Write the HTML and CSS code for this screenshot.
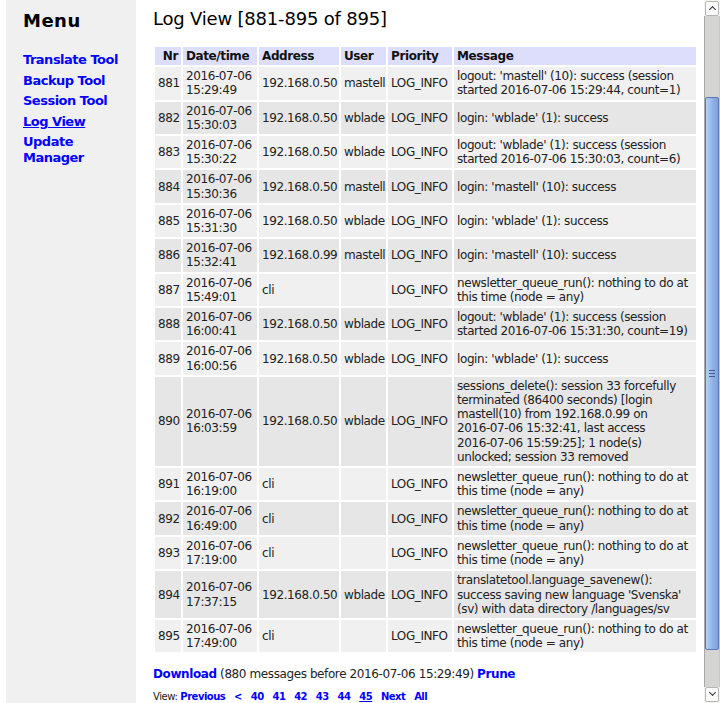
FILE: index.html
```html
<!DOCTYPE html>
<html lang="en">
<head>
    <meta charset="UTF-8">
    <title>Log View</title>
    <link rel="stylesheet" href="styles.css">
</head>
<body>
    <div class="page">
        <nav class="sidebar">
            <h2>Menu</h2>
            <ul class="menu">
                <li><a href="#">Translate Tool</a></li>
                <li><a href="#">Backup Tool</a></li>
                <li><a href="#">Session Tool</a></li>
                <li><a href="#" class="current">Log View</a></li>
                <li><a href="#">Update Manager</a></li>
            </ul>
        </nav>

        <main class="content">
            <h1>Log View [881-895 of 895]</h1>

            <table class="log">
                <thead>
                    <tr>
                        <th class="nr">Nr</th>
                        <th class="date">Date/time</th>
                        <th class="addr">Address</th>
                        <th class="user">User</th>
                        <th class="prio">Priority</th>
                        <th>Message</th>
                    </tr>
                </thead>
                <tbody>
                    <tr><td class="nr">881</td><td class="date">2016-07-06<br>15:29:49</td><td class="addr">192.168.0.50</td><td class="user">mastell</td><td class="prio">LOG_INFO</td><td>logout: 'mastell' (10): success (session started <span class="ts">2016-07-06</span> 15:29:44, count=1)</td></tr>
                    <tr><td class="nr">882</td><td class="date">2016-07-06<br>15:30:03</td><td class="addr">192.168.0.50</td><td class="user">wblade</td><td class="prio">LOG_INFO</td><td>login: 'wblade' (1): success</td></tr>
                    <tr><td class="nr">883</td><td class="date">2016-07-06<br>15:30:22</td><td class="addr">192.168.0.50</td><td class="user">wblade</td><td class="prio">LOG_INFO</td><td>logout: 'wblade' (1): success (session started <span class="ts">2016-07-06</span> 15:30:03, count=6)</td></tr>
                    <tr><td class="nr">884</td><td class="date">2016-07-06<br>15:30:36</td><td class="addr">192.168.0.50</td><td class="user">mastell</td><td class="prio">LOG_INFO</td><td>login: 'mastell' (10): success</td></tr>
                    <tr><td class="nr">885</td><td class="date">2016-07-06<br>15:31:30</td><td class="addr">192.168.0.50</td><td class="user">wblade</td><td class="prio">LOG_INFO</td><td>login: 'wblade' (1): success</td></tr>
                    <tr><td class="nr">886</td><td class="date">2016-07-06<br>15:32:41</td><td class="addr">192.168.0.99</td><td class="user">mastell</td><td class="prio">LOG_INFO</td><td>login: 'mastell' (10): success</td></tr>
                    <tr><td class="nr">887</td><td class="date">2016-07-06<br>15:49:01</td><td class="addr">cli</td><td class="user"></td><td class="prio">LOG_INFO</td><td>newsletter_queue_run(): nothing to do at this time (node = any)</td></tr>
                    <tr><td class="nr">888</td><td class="date">2016-07-06<br>16:00:41</td><td class="addr">192.168.0.50</td><td class="user">wblade</td><td class="prio">LOG_INFO</td><td>logout: 'wblade' (1): success (session started <span class="ts">2016-07-06</span> 15:31:30, count=19)</td></tr>
                    <tr><td class="nr">889</td><td class="date">2016-07-06<br>16:00:56</td><td class="addr">192.168.0.50</td><td class="user">wblade</td><td class="prio">LOG_INFO</td><td>login: 'wblade' (1): success</td></tr>
                    <tr><td class="nr">890</td><td class="date">2016-07-06<br>16:03:59</td><td class="addr">192.168.0.50</td><td class="user">wblade</td><td class="prio">LOG_INFO</td><td>sessions_delete(): session 33 forcefully terminated (86400 seconds) [login mastell(10) from 192.168.0.99 on <span class="ts">2016-07-06</span> 15:32:41, last access <span class="ts">2016-07-06</span> 15:59:25]; 1 node(s) unlocked; session 33 removed</td></tr>
                    <tr><td class="nr">891</td><td class="date">2016-07-06<br>16:19:00</td><td class="addr">cli</td><td class="user"></td><td class="prio">LOG_INFO</td><td>newsletter_queue_run(): nothing to do at this time (node = any)</td></tr>
                    <tr><td class="nr">892</td><td class="date">2016-07-06<br>16:49:00</td><td class="addr">cli</td><td class="user"></td><td class="prio">LOG_INFO</td><td>newsletter_queue_run(): nothing to do at this time (node = any)</td></tr>
                    <tr><td class="nr">893</td><td class="date">2016-07-06<br>17:19:00</td><td class="addr">cli</td><td class="user"></td><td class="prio">LOG_INFO</td><td>newsletter_queue_run(): nothing to do at this time (node = any)</td></tr>
                    <tr><td class="nr">894</td><td class="date">2016-07-06<br>17:37:15</td><td class="addr">192.168.0.50</td><td class="user">wblade</td><td class="prio">LOG_INFO</td><td>translatetool.language_savenew(): success saving new language 'Svenska' (sv) with data directory /languages/sv</td></tr>
                    <tr><td class="nr">895</td><td class="date">2016-07-06<br>17:49:00</td><td class="addr">cli</td><td class="user"></td><td class="prio">LOG_INFO</td><td>newsletter_queue_run(): nothing to do at this time (node = any)</td></tr>
                </tbody>
            </table>

            <p class="actions"><a href="#">Download</a> (880 messages before 2016-07-06 15:29:49) <a href="#">Prune</a></p>

            <p class="pager">View: <a href="#">Previous</a> <a href="#">&lt;</a> <a href="#">40</a> <a href="#">41</a> <a href="#">42</a> <a href="#">43</a> <a href="#">44</a> <a href="#" class="current">45</a> <a href="#">Next</a> <a href="#">All</a></p>
        </main>
    </div>

    <!-- browser scrollbar, as seen in the screenshot -->
    <div class="scrollbar">
        <div class="sb-btn sb-up"></div>
        <div class="sb-track">
            <div class="sb-thumb"><span></span><span></span><span></span></div>
        </div>
        <div class="sb-btn sb-down"></div>
    </div>
</body>
</html>
```

FILE: styles.css
```css
html, body {
    overflow: hidden;
}
body {
    margin: 0;
    font-family: 'DejaVu Sans', Verdana, sans-serif;
    font-size: 12px;
    letter-spacing: -0.4px;
    color: #222;
    background: #fff;
}
a {
    color: #0000ff;
    font-weight: bold;
    text-decoration: none;
}
a.current {
    text-decoration: underline;
}
.page {
    display: flex;
    min-height: 703px;
    padding: 0 22px 0 6px;
}
.sidebar {
    width: 130px;
    flex-shrink: 0;
    box-sizing: border-box;
    padding: 0 6px 0 17px;
    background: #f0f0f0;
}
.sidebar h2 {
    margin: 10px 0 0;
    font-size: 18px;
    line-height: 22px;
    font-weight: 900;
    color: #000;
    letter-spacing: 0.5px;
}
.menu {
    list-style: none;
    margin: 20px 0 0;
    padding: 0;
}
.menu li {
    margin-bottom: 4.5px;
}
.menu a {
    font-size: 13px;
    line-height: 16px;
    letter-spacing: -0.5px;
}
.content {
    flex: 1;
    padding-left: 17px;
}
.content h1 {
    margin: 7px 0 14px;
    font-size: 18px;
    line-height: 24px;
    font-weight: normal;
    letter-spacing: -0.2px;
    color: #000;
}
.log {
    width: 100%;
    table-layout: fixed;
    border-spacing: 2px;
}
.log th, .log td {
    padding: 2px 3px;
    line-height: 14.2px;
    text-align: left;
    vertical-align: middle;
}
.log th {
    background: #ddddfc;
    font-weight: bold;
    color: #111;
}
.log tbody tr:nth-child(odd) td {
    background: #f0f0f0;
}
.log tbody tr:nth-child(even) td {
    background: #e6e6e6;
}
.log .nr {
    width: 20px;
    text-align: right;
}
.log .date {
    width: 68px;
    white-space: nowrap;
}
.log .addr {
    width: 74px;
    white-space: nowrap;
}
.log .user {
    width: 39px;
    white-space: nowrap;
}
.log .prio {
    width: 58px;
    white-space: nowrap;
}
.ts {
    white-space: nowrap;
}
.actions {
    margin: 12px 0 0;
    font-size: 12px;
    line-height: 16px;
}
.pager {
    margin: 8px 0 0;
    font-size: 10px;
    line-height: 14px;
}
.pager a {
    margin: 0 3px;
    letter-spacing: -0.5px;
}
.pager a:first-child {
    margin-left: 0;
}
.scrollbar {
    position: fixed;
    top: 0;
    right: 0;
    width: 16px;
    height: 100%;
    display: flex;
    flex-direction: column;
    background: #f3f3ef;
}
.sb-btn {
    height: 15px;
    margin: 1px 1px 0;
    box-sizing: border-box;
    border: 1px solid #b5b5b5;
    border-radius: 2px;
    background: #fafafa;
    position: relative;
}
.sb-down {
    margin: 0 1px 1px;
}
.sb-btn::after {
    content: '';
    position: absolute;
    left: 4px;
    width: 4px;
    height: 4px;
    border-left: 1.5px solid #333;
    border-top: 1.5px solid #333;
}
.sb-up::after {
    top: 5px;
    transform: rotate(45deg);
}
.sb-down::after {
    top: 2px;
    transform: rotate(225deg);
}
.sb-track {
    flex: 1;
    padding-top: 81px;
    padding-bottom: 37px;
    background: #d4d4d2;
    border-left: 1px solid #a8a8a8;
    border-right: 1px solid #c8c8c8;
    display: flex;
    flex-direction: column;
}
.sb-thumb {
    flex: 1;
    box-sizing: border-box;
    border: 1px solid #5a79b0;
    border-radius: 2px;
    background: linear-gradient(to right, #b8d0f2, #8fb0e6 60%, #7fa2dc);
    display: flex;
    flex-direction: column;
    justify-content: center;
    align-items: center;
    gap: 2px;
}
.sb-thumb span {
    display: block;
    width: 6px;
    height: 1px;
    background: #3c5c98;
}
```
